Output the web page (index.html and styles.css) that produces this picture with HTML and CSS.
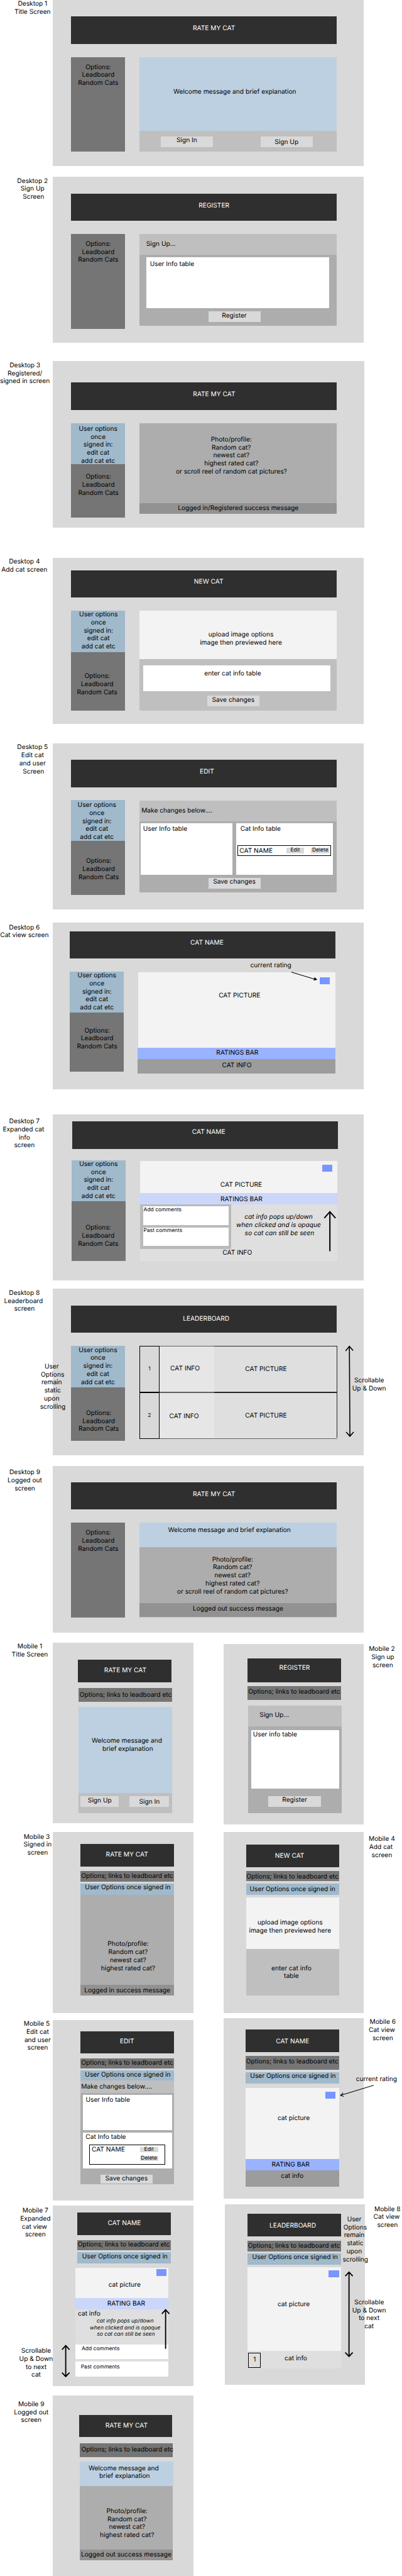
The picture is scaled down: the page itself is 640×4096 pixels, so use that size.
FILE: index.html
```html
<!DOCTYPE html>
<html lang="en">
<head>
<meta charset="utf-8">
<title>Rate My Cat wireframes</title>
<link rel="stylesheet" href="styles.css">
</head>
<body>
<main class="board">

<section class="frame d1">
<div class="label">Desktop 1
Title Screen</div>
<div class="screen">
<div class="bar">RATE MY CAT</div>
<div class="body">
<div class="side"><div class="opts">Options:
Leadboard
Random Cats</div></div>
<div class="content">
<div class="welcome">Welcome message and brief explanation</div>
<div class="actions"><div class="btn">Sign In</div><div class="btn low">Sign Up</div></div>
</div>
</div>
</div>
</section>

<section class="frame d2">
<div class="label">Desktop 2
Sign Up
 Screen</div>
<div class="screen">
<div class="bar">REGISTER</div>
<div class="body">
<div class="side"><div class="opts">Options:
Leadboard
Random Cats</div></div>
<div class="content">
<div class="head">Sign Up...</div>
<div class="panel"><div class="sheet">User Info table</div><div class="btn">Register</div></div>
</div>
</div>
</div>
</section>

<section class="frame d3">
<div class="label">Desktop 3
Registered/
signed in screen</div>
<div class="screen">
<div class="bar">RATE MY CAT</div>
<div class="body">
<div class="side"><div class="user">User options
once
signed in:
edit cat
add cat etc</div><div class="opts">Options:
Leadboard
Random Cats</div></div>
<div class="content">
<div class="photo">Photo/profile:
Random cat?
newest cat?
highest rated cat?
or scroll reel of random cat pictures?</div>
<div class="msg">Logged in/Registered success message</div>
</div>
</div>
</div>
</section>

<section class="frame d4">
<div class="label">Desktop 4
Add cat screen</div>
<div class="screen">
<div class="bar">NEW CAT</div>
<div class="body">
<div class="side"><div class="user">User options
once
signed in:
edit cat
add cat etc</div><div class="opts">Options:
Leadboard
Random Cats</div></div>
<div class="content">
<div class="picture">upload image options
image then previewed here</div>
<div class="form"><div class="sheet">enter cat info table</div><div class="btn">Save changes</div></div>
</div>
</div>
</div>
</section>

<section class="frame d5">
<div class="label">Desktop 5
Edit cat
and user
 Screen</div>
<div class="screen">
<div class="bar">EDIT</div>
<div class="body">
<div class="side"><div class="user">User options
once
signed in:
edit cat
add cat etc</div><div class="opts">Options:
Leadboard
Random Cats</div></div>
<div class="content">
<div class="head">Make changes below....</div>
<div class="panel">
<div class="sheets"><div class="sheet">User Info table</div><div class="sheet cats"><div class="title">Cat Info table</div><div class="entry"><div class="name">CAT NAME</div><div class="tools"><div class="mini">Edit</div><div class="mini">Delete</div></div></div></div></div>
<div class="btn">Save changes</div>
</div>
</div>
</div>
</div>
</section>

<section class="frame d6">
<div class="label">Desktop 6
Cat view screen</div>
<div class="screen">
<div class="bar">CAT NAME</div>
<div class="body">
<div class="side"><div class="user">User options
once
signed in:
edit cat
add cat etc</div><div class="opts">Options:
Leadboard
Random Cats</div></div>
<div class="content">
<div class="picture">CAT PICTURE<span class="score"></span></div>
<div class="rating">RATINGS BAR</div>
<div class="info">CAT INFO</div>
</div>
</div>
<div class="note">current rating</div>
<svg class="arrow" width="52" height="18" viewBox="0 0 52 18"><path d="M1 2 44 15" fill="none" stroke="#000" stroke-width="1.2"/><path d="M49.5 16 43 17.6 44.5 12Z" stroke="#000" stroke-width=".5"/></svg>
</div>
</section>

<section class="frame d7">
<div class="label">Desktop 7
Expanded cat 
info
screen</div>
<div class="screen">
<div class="bar">CAT NAME</div>
<div class="body">
<div class="side"><div class="user">User options
once
signed in:
edit cat
add cat etc</div><div class="opts">Options:
Leadboard
Random Cats</div></div>
<div class="content">
<div class="picture">CAT PICTURE<span class="score"></span></div>
<div class="rating">RATINGS BAR</div>
<div class="info">
<div class="split"><div class="comments"><div class="sheet">Add comments</div><div class="sheet">Past comments</div></div><div class="hint">cat info pops up/down
when clicked and is opaque
 so cat can still be seen</div></div>
<div class="caption">CAT INFO</div>
<svg class="arrow" width="24" height="77" viewBox="0 0 24 77"><path d="M12 76V2M1.5 14 12 2l10.5 12" fill="none" stroke="#000" stroke-width="2.4"/></svg>
</div>
</div>
</div>
</div>
</section>

<section class="frame d8">
<div class="label">Desktop 8
Leaderboard 
screen</div>
<div class="screen">
<div class="bar">LEADERBOARD</div>
<div class="body">
<div class="side"><div class="user">User options
once
signed in:
edit cat
add cat etc</div><div class="opts">Options:
Leadboard
Random Cats</div></div>
<div class="content">
<div class="rank"><div class="num">1</div><div class="cell">CAT INFO</div><div class="pic">CAT PICTURE</div></div>
<div class="rank second"><div class="num">2</div><div class="cell">CAT INFO</div><div class="end"><div class="pic">CAT PICTURE</div></div></div>
</div>
</div>
<div class="note static">User 
Options
remain 
static
upon 
scrolling</div>
<div class="note scroll">Scrollable
Up &amp; Down</div>
<svg class="arrow" width="18" height="172" viewBox="0 0 18 172"><path d="M8.5 2 9.5 170M1.5 10.5 8.5 2l7 8M2.5 162.5l7 8 7-8" fill="none" stroke="#000" stroke-width="1.9"/></svg>
</div>
</section>

<section class="frame d9">
<div class="label">Desktop 9
Logged out
screen</div>
<div class="screen">
<div class="bar">RATE MY CAT</div>
<div class="body">
<div class="side"><div class="opts">Options:
Leadboard
Random Cats</div></div>
<div class="content">
<div class="welcome">Welcome message and brief explanation</div>
<div class="photo">Photo/profile:
Random cat?
newest cat?
highest rated cat?
or scroll reel of random cat pictures?</div>
<div class="msg">Logged out success message</div>
</div>
</div>
</div>
</section>

<div class="mobiles">
<div class="left">

<section class="frame m m1">
<div class="label">Mobile 1
Title Screen</div>
<div class="screen">
<div class="bar">RATE MY CAT</div>
<div class="opts">Options; links to leadboard etc</div>
<div class="welcome">Welcome message and
 brief explanation</div>
<div class="actions"><div class="btn">Sign Up</div><div class="btn low">Sign In</div></div>
</div>
</section>

<section class="frame m m3">
<div class="label">Mobile 3 
Signed in
screen</div>
<div class="screen">
<div class="bar">RATE MY CAT</div>
<div class="opts">Options; links to leadboard etc</div>
<div class="user">User Options once signed in</div>
<div class="photo">Photo/profile:
Random cat?
newest cat?
highest rated cat?</div>
<div class="msg">Logged in success message</div>
</div>
</section>

<section class="frame m m5">
<div class="label">Mobile 5 
Edit cat
and user
screen</div>
<div class="screen">
<div class="bar">EDIT</div>
<div class="opts">Options; links to leadboard etc</div>
<div class="user">User Options once signed in</div>
<div class="head">Make changes below....</div>
<div class="panel">
<div class="sheet">User Info table</div>
<div class="sheet cats"><div class="title">Cat Info table</div><div class="entry"><div class="name">CAT NAME</div><div class="tools"><div class="mini">Edit</div><div class="mini">Delete</div></div></div></div>
<div class="btn">Save changes</div>
</div>
</div>
</section>

<section class="frame m m7">
<div class="label">Mobile 7
Expanded
cat view 
screen</div>
<div class="screen">
<div class="bar">CAT NAME</div>
<div class="opts">Options; links to leadboard etc</div>
<div class="user">User Options once signed in</div>
<div class="stack">
<div class="picture">cat picture<span class="score"></span></div>
<div class="rating">RATING BAR</div>
<div class="info"><div class="caption">cat info</div><div class="hint">cat info pops up/down
when clicked and is opaque
 so cat can still be seen</div><div class="sheet">Add comments</div><div class="sheet">Past comments</div></div>
</div>
<svg class="arrow up" width="18" height="76" viewBox="0 0 18 76"><path d="M9 75V2M2 9.5 9 2l7 7.5" fill="none" stroke="#000" stroke-width="2.2"/></svg>
<svg class="arrow both" width="18" height="62" viewBox="0 0 18 62"><path d="M9 2v58M2 9.5 9 2l7 7.5M2 52.5 9 60l7-7.5" fill="none" stroke="#000" stroke-width="2.2"/></svg>
<div class="note scroll">Scrollable
Up &amp; Down
to next
cat</div>
</div>
</section>

<section class="frame m m9">
<div class="label">Mobile 9
Logged out
screen</div>
<div class="screen">
<div class="bar">RATE MY CAT</div>
<div class="opts">Options; links to leadboard etc</div>
<div class="welcome">Welcome message and
 brief explanation</div>
<div class="photo">Photo/profile:
Random cat?
newest cat?
highest rated cat?</div>
<div class="msg">Logged out success message</div>
</div>
</section>

</div>
<div class="right">

<section class="frame m m2">
<div class="screen">
<div class="bar">REGISTER</div>
<div class="opts">Options; links to leadboard etc</div>
<div class="head">Sign Up...</div>
<div class="panel"><div class="sheet">User info table</div><div class="btn">Register</div></div>
</div>
<div class="label">Mobile 2
 Sign up
 screen</div>
</section>

<section class="frame m m4">
<div class="screen">
<div class="bar">NEW CAT</div>
<div class="opts">Options; links to leadboard etc</div>
<div class="user">User Options once signed in</div>
<div class="picture">upload image options
image then previewed here</div>
<div class="form">enter cat info
table</div>
</div>
<div class="label">Mobile 4
Add cat 
screen</div>
</section>

<section class="frame m m6">
<div class="screen">
<div class="bar">CAT NAME</div>
<div class="opts">Options; links to leadboard etc</div>
<div class="user">User Options once signed in</div>
<div class="picture">cat picture<span class="score"></span></div>
<div class="rating">RATING BAR</div>
<div class="info">cat info</div>
<div class="note">current rating</div>
<svg class="arrow" width="66" height="24" viewBox="0 0 66 24"><path d="M64.5 2 2.5 21M7.5 16 2.5 21l6 2" fill="none" stroke="#000" stroke-width="1.2"/></svg>
</div>
<div class="label"> Mobile 6
Cat view
 screen</div>
</section>

<section class="frame m m8">
<div class="screen">
<div class="bar">LEADERBOARD</div>
<div class="opts">Options; links to leadboard etc</div>
<div class="user">User Options once signed in</div>
<div class="picture">cat picture<span class="score"></span></div>
<div class="info">cat info<span class="place">1</span></div>
<div class="note static">User 
Options
remain 
static
upon 
scrolling</div>
<svg class="arrow" width="18" height="162" viewBox="0 0 18 162"><path d="M9 2v158M2 9.5 9 2l7 7.5M2 152.5 9 160l7-7.5" fill="none" stroke="#000" stroke-width="2.2"/></svg>
<div class="note scroll">Scrollable
Up &amp; Down
to next
cat</div>
</div>
<div class="label">Mobile 8
Cat view 
screen</div>
</section>

</div>
</div>
</main>
</body>
</html>
```
FILE: styles.css
```css
* { box-sizing: border-box; }
html, body { margin: 0; background: #fff; overflow: hidden; }
.board {
  width: 753px;
  height: 4821px;
  zoom: 0.8497;
  font: 12px/15px Inter, "Liberation Sans", sans-serif;
  color: #000;
  text-align: center;
  text-rendering: geometricPrecision;
}

/* Shared parts */
.frame { display: flex; height: 311px; }
.label { flex: 0 0 99px; white-space: pre; padding-top: .5px; }
.screen { position: relative; width: 583px; height: 311px; background: #d9d9d9; padding: 31px 0 0 34px; }
.bar { width: 498px; height: 51px; background: #2f2f2f; color: #fff; padding: 15.3px 0 0 38px; }
.body { display: flex; gap: 27px; margin-top: 25px; }
.side { width: 101px; }
.content { width: 370px; }
.opts, .user, .welcome, .photo, .msg, .picture, .rating, .info, .form, .head, .sheet, .hint, .btn, .note, .bar { white-space: pre; }
.info, .panel, .sheets, .cats, .d4 .form { white-space: normal; }
.opts { background: #757575; height: 177px; padding: 11.5px 0 0 1px; }
.user { background: #a0b9cb; height: 77px; }
.welcome { background: #bdd0e1; }
.photo { background: #adadad; }
.msg { background: #929292; }
.picture { position: relative; background: #f3f3f3; }
.form, .actions, .head { background: #bfbfbf; }
.head { height: 39px; text-align: left; }
.panel { background: #adadad; }
.sheet { background: #fff; text-align: left; }
.btn { width: 98px; height: 20px; background: #d9d9d9; padding-top: .5px; }
.btn.low { padding-top: 3.5px; }
.actions { display: flex; }
.score { position: absolute; width: 19px; height: 13px; background: #7896ff; }
.rating { height: 21px; background: #99b3ff; }
.info { background: #9c9c9c; }
.note, .arrow { position: absolute; }
.hint { font-style: italic; }
.mini { width: 34px; height: 10px; background: #d9d9d9; font-size: 10px; line-height: 11.4px; text-align: center; }
.entry { display: flex; border: 1px solid #000; }
.name { text-align: left; }

/* Desktop 1 */
.d1 .label, .d2 .label, .d5 .label { padding-left: 23px; }
.d1 .welcome { height: 138px; padding: 57.5px 12px 0 0; }
.d1 .actions { height: 39px; padding: 10px 0 0 40px; gap: 89px; }

/* Desktop 2 */
.d2 { margin-top: 20px; }
.d2 .head { padding: 11.5px 0 0 13px; }
.d2 .panel { height: 133px; padding: 4px 0 0 13px; }
.d2 .sheet { width: 343px; height: 96px; padding: 6.5px 0 0 7px; }
.d2 .btn { margin: 6px 0 0 117px; padding-right: 2px; }

/* Desktop 3 */
.d3 { margin-top: 34px; }
.d3 .label { padding-right: 6px; }
.d3 .screen { padding-top: 40px; }
.d3 .user { padding-top: 3.5px; }
.d3 .opts { height: 100px; padding-top: 16.5px; }
.d3 .photo { height: 150px; padding: 23.5px 25.6px 0 0; }
.d3 .msg { height: 20px; padding-top: 2.5px; }

/* Desktop 4 */
.d4 { margin-top: 57px; }
.d4 .label, .d6 .label, .d7 .label, .d8 .label { padding-right: 7.6px; }
.d4 .screen { padding-top: 23px; }
.d4 .bar { padding: 14.2px 0 0 18px; }
.d4 .user { padding-left: 2px; }
.d4 .opts { height: 110px; padding: 38.5px 3px 0 0; }
.d4 .picture { height: 90px; padding: 37.5px 0 0 10.8px; }
.d4 .form { height: 97px; padding: 12px 0 0 7px; }
.d4 .sheet { width: 351px; height: 49px; padding: 8.5px 15px 0 0; text-align: center; }
.d4 .btn { margin: 8px 0 0 120px; }

/* Desktop 5 */
.d5 { margin-top: 36px; }
.d5 .bar { padding-left: 11.6px; }
.d5 .body { margin-top: 24px; }
.d5 .user { padding: 2.5px 4px 0 0; }
.d5 .opts { height: 101px; padding: 30.5px 0 0 3px; }
.d5 .content { margin-top: 1px; }
.d5 .head { padding: 11.5px 0 0 4px; }
.d5 .panel { height: 133px; padding: 4px 0 0 3px; }
.d5 .sheets { display: flex; gap: 7px; }
.d5 .sheet { width: 172px; height: 96px; padding: 3.5px 0 0 4px; }
.d5 .cats { width: 181px; padding-left: 2px; }
.d5 .title { padding-left: 5.5px; }
.d5 .entry { width: 175px; height: 20px; margin-top: 22.5px; }
.d5 .name { width: 90px; padding: 2.2px 0 0 2.6px; }
.d5 .tools { display: flex; gap: 13px; padding-top: 4px; }
.d5 .btn { margin: 6px 0 0 127px; padding-right: 2px; }

/* Desktop 6 */
.d6 { margin-top: 25px; }
.d6 .label { padding-top: 1.5px; }
.d6 .screen { padding: 16px 0 0 32px; }
.d6 .bar { padding: 14.2px 0 0 15.6px; }
.d6 .body { margin-top: 24px; }
.d6 .user, .d7 .user, .d8 .user { padding-top: .5px; }
.d6 .opts { height: 111px; padding-top: 26.5px; }
.d6 .content { margin-top: 1px; }
.d6 .picture { height: 142px; padding: 37.2px 0 0 9.6px; }
.d6 .score { right: 11px; top: 10px; }
.d6 .rating { width: 371px; margin-left: -1px; padding: 2.2px 0 0 2.4px; }
.d6 .info { height: 27px; width: 370px; margin-left: -1px; padding: 5.2px 0 0 1.4px; }
.d6 .note { left: 370px; top: 72.3px; }
.d6 .arrow { left: 446px; top: 90px; }

/* Desktop 7 */
.d7 { margin-top: 47px; }
.d7 .label { padding-top: 6.5px; }
.d7 .screen { padding: 14px 0 0 36px; }
.d7 .bar { padding: 12.5px 0 0 14px; }
.d7 .body { margin: 21px 0 0 -1px; }
.d7 .opts { height: 112px; padding: 42.5px 1px 0 0; }
.d7 .content { margin-top: 2px; }
.d7 .picture { height: 60px; padding: 37.2px 0 0 10px; }
.d7 .score { right: 9px; top: 7px; }
.d7 .rating, .m7 .rating { background: #cbd7fa; }
.d7 .rating { padding: 4.2px 0 0 10.8px; }
.d7 .info { position: relative; height: 106px; background: #dfdfdf; }
.d7 .split { display: flex; }
.d7 .comments { display: grid; align-content: start; gap: 4px; width: 171px; height: 83px; background: #bababa; padding: 4px 0 0 6px; }
.d7 .sheet { width: 160px; height: 35px; font-size: 10px; line-height: 12px; padding: .7px 0 0 1px; }
.d7 .hint { width: 199px; padding: 16.5px 21px 0 0; }
.d7 .caption { padding-right: 4.6px; }
.d7 .arrow { left: 344px; top: 12px; }

/* Desktop 8 */
.d8 { margin-top: 16px; }
.d8 .bar { padding: 18.2px 0 0 8.6px; }
.d8 .opts { height: 100px; padding: 41.5px 0 0 3px; }
.rank { display: grid; grid-template-columns: 38px 102px 231px; width: 371px; height: 87px; }
.num { border: 1px solid #000; padding-top: 35.2px; font-size: 10px; }
.cell { background: #e6e6e6; border: solid #606060; border-width: 1px 0; padding: 34.2px 6.4px 0 0; }
.pic { background: #dfdfdf; border: 1px solid #252525; border-left: 0; padding: 35.2px 35px 0 0; }
.second .cell { padding: 36.2px 10.4px 0 0; }
.end { background: #e6e6e6; border-bottom: 1px solid #606060; }
.end .pic { height: 84px; border-bottom: 0; }
.d8 .static { left: -24px; top: 138.2px; width: 47px; }
.d8 .scroll { left: 561px; top: 164.2px; }
.d8 .arrow { left: 547px; top: 105px; }

/* Desktop 9 */
.d9 { margin-top: 21px; }
.d9 .label { padding: 4.5px 6px 0 0; }
.d9 .screen { padding-top: 30px; }
.d9 .content { height: 177px; background: #bfbfbf; }
.d9 .welcome { height: 45px; padding: 6.5px 32.4px 0 0; }
.d9 .photo { height: 105px; padding: 16.5px 20.4px 0 0; }
.d9 .msg { height: 25.6px; padding-top: 3.2px; }

/* Mobile columns */
.mobiles { display: flex; gap: 57px; margin-top: 19px; }
.right { padding-top: 2px; }
.m, .m .screen { height: 338px; }
.m .screen { width: 263px; flex: none; }
.m .bar, .m .opts, .m .user, .m .photo, .m .msg, .m .picture, .m .form, .m .head, .m .panel, .m .actions, .m .rating, .m .info { width: 175px; }
.m .bar { height: 42px; }
.m .opts { height: 19px; margin-top: 9px; padding: 1.5px 0 0 0; }
.m .user { height: 21px; margin-top: 4px; padding: .5px 0 0 2px; }
.m .msg { height: 20px; padding-top: 2.5px; }
.right .label { flex-basis: 71px; padding-right: 4px; }

/* Mobile 1 */
.m1 .label { padding-left: 12.6px; }
.m1 .screen { padding: 32px 0 0 47px; }
.m1 .bar { padding: 13.3px 0 0 2.6px; }
.m1 .opts { height: 26px; margin: 11px 0 0 1px; padding: 5.5px 0 0 2px; }
.m1 .welcome { width: 176px; height: 161px; margin: 9px 0 0 1px; padding: 56.5px 0 0 5.4px; }
.m1 .actions { height: 38px; margin-left: 1px; padding: 7px 0 0 4px; gap: 20px; }
.m1 .btn { width: 72px; }
.m1 .btn.low { width: 74px; }

/* Mobile 2 */
.m2 .label { padding-top: 3.5px; }
.m2 .screen { padding: 28px 0 0 45px; }
.m2 .bar { height: 44px; padding: 10.8px 0 0 1px; }
.m2 .opts { height: 26px; margin-top: 7px; padding-top: 4.5px; }
.m2 .head { margin: 11px 0 0 1px; padding: 10.5px 0 0 21.5px; }
.m2 .panel { height: 162px; margin-left: 1px; padding: 7px 0 0 6px; }
.m2 .sheet { width: 164px; height: 109px; padding: 1.5px 0 0 3px; }
.m2 .btn { margin: 14px 0 0 32px; }

/* Mobile 3 */
.m3 { margin-top: 17px; }
.m3 .label { padding: 1.5px 0 0 42px; }
.m3 .screen { padding: 22px 0 0 52px; }
.m3 .bar { padding: 12.5px 1px 0 0; }
.m3 .photo { height: 169px; padding: 85.5px 0 0 3px; }

/* Mobile 4 */
.m4 { margin-top: 15px; }
.m4 .label { padding-top: 5.5px; }
.m4 .screen { padding: 23px 0 0 42px; }
.m4 .bar { padding: 14.2px 11.6px 0 0; }
.m4 .opts { margin-top: 7px; padding: 3.5px 1px 0 0; }
.m4 .user { margin-top: 5px; padding: 3.5px 1px 0 0; }
.m4 .picture { height: 96px; margin-top: 5px; padding: 40.5px 10px 0 0; }
.m4 .form { height: 88px; padding: 29.5px 5px 0 0; }

/* Mobile 5 */
.m5 { margin-top: 13px; }
.m5 .label { padding: .5px 0 0 42px; }
.m5 .screen { padding: 21px 0 0 52px; }
.m5 .bar { padding: 12.1px 1px 0 0; }
.m5 .user { height: 18px; }
.m5 .head { height: 24px; padding: 5.5px 0 0 1px; }
.m5 .panel { height: 171px; padding: 3px 0 0 4px; }
.m5 .sheet { width: 167px; height: 67px; padding: 2.5px 0 0 5.6px; }
.m5 .cats { margin-top: 4px; padding: 1.5px 0 0 5.4px; }
.m5 .entry { width: 143px; height: 38.6px; margin: 5.5px 0 0 6.6px; }
.m5 .name { width: 94px; padding: 2.2px 0 0 3.6px; }
.m5 .tools { display: grid; align-content: start; gap: 6px; padding-top: 4px; }
.m5 .btn { height: 16px; margin: 12px 0 0 33px; padding-top: 0; }

/* Mobile 6 */
.m6 { margin-top: 10px; }
.m6 .label { padding-top: 0; }
.m6 .screen { padding: 21px 0 0 41px; }
.m6 .bar { padding: 15.1px 0 0 1px; }
.m6 .opts { height: 26px; margin-top: 7px; padding-top: 4.5px; }
.m6 .user { margin-top: 5px; padding-left: 3px; }
.m6 .picture { height: 133px; margin-top: 9px; padding: 48.5px 0 0 5.6px; }
.m6 .score { right: 6px; top: 7px; }
.m6 .rating { padding: 3.5px 5.8px 0 0; }
.m6 .info { height: 30px; padding-top: 3.5px; }
.m6 .note { left: 248px; top: 107.5px; }
.m6 .arrow { left: 216px; top: 124px; }

/* Mobile 7 */
.m7 { margin-top: 9px; }
.m7 .label { padding: 3.2px 0 0 33.6px; }
.m7 .screen { padding: 14px 0 0 46px; }
.m7 .bar { padding: 12.5px 0 0 1px; }
.m7 .opts { padding-right: 1px; }
.m7 .user { padding-left: 3px; }
.m7 .stack { margin: 8px 0 0 -4px; }
.m7 .picture { height: 57px; padding: 24.5px 0 0 9.8px; }
.m7 .score { right: 4px; top: 2px; }
.m7 .rating { padding: 3.1px 0 0 16px; }
.m7 .info { height: 126px; background: #dfdfdf; padding-top: .5px; }
.m7 .caption { text-align: left; padding-left: 5px; }
.m7 .hint { font-size: 10px; line-height: 12px; padding-left: 12px; margin: 1.2px 0 13.3px; }
.m7 .sheet { font-size: 10px; line-height: 12px; height: 27px; padding: 2.6px 0 0 12px; }
.m7 .sheet + .sheet { height: 28px; margin-top: 5px; padding: 3.7px 0 0 10.5px; }
.m7 .up { left: 202px; top: 194px; }
.m7 .both { left: 15px; top: 261px; }
.m7 .scroll { left: -63px; top: 265.5px; }

/* Mobile 8 */
.m8 { margin: 10px 0 0 2px; }
.right .m8 .label { flex-basis: 69px; padding: 2.3px 0 0 15px; }
.m8 .screen { padding: 18px 0 0 43px; }
.m8 .bar { padding: 15px 6px 0 0; }
.m8 .opts { padding-right: 1px; }
.m8 .user { padding: .1px 0 0 2.6px; }
.m8 .picture { height: 157px; margin-top: 5px; padding: 62.5px 2.4px 0 0; }
.m8 .score { right: 4px; top: 6px; }
.m8 .info { position: relative; height: 32px; background: #dfdfdf; padding: 7.1px 0 0 5.8px; }
.place { position: absolute; left: 1px; top: 3px; width: 24px; height: 28px; border: 1px solid #000; padding-top: 4.5px; }
.m8 .static { left: 221px; top: 21.2px; width: 47px; }
.m8 .arrow { left: 224px; top: 125px; }
.m8 .scroll { left: 239px; top: 176.5px; }

/* Mobile 9 */
.m9 { margin-top: 18px; }
.m9 .label { padding: 9.2px 0 0 18px; }
.m9 .screen { padding: 36px 0 0 49px; }
.m9 .bar { padding: 13.3px 0 0 3px; }
.m9 .opts { height: 26px; margin: 11px 0 0 1px; padding: 5.2px 0 0 3.4px; }
.m9 .welcome { width: 176px; height: 45px; margin: 9px 0 0 1px; padding: 5.2px 10.6px 0 0; }
.m9 .photo { height: 119px; margin-left: 1px; padding: 40.5px 0 0 3px; }
.m9 .msg { margin-left: 1px; }
```
